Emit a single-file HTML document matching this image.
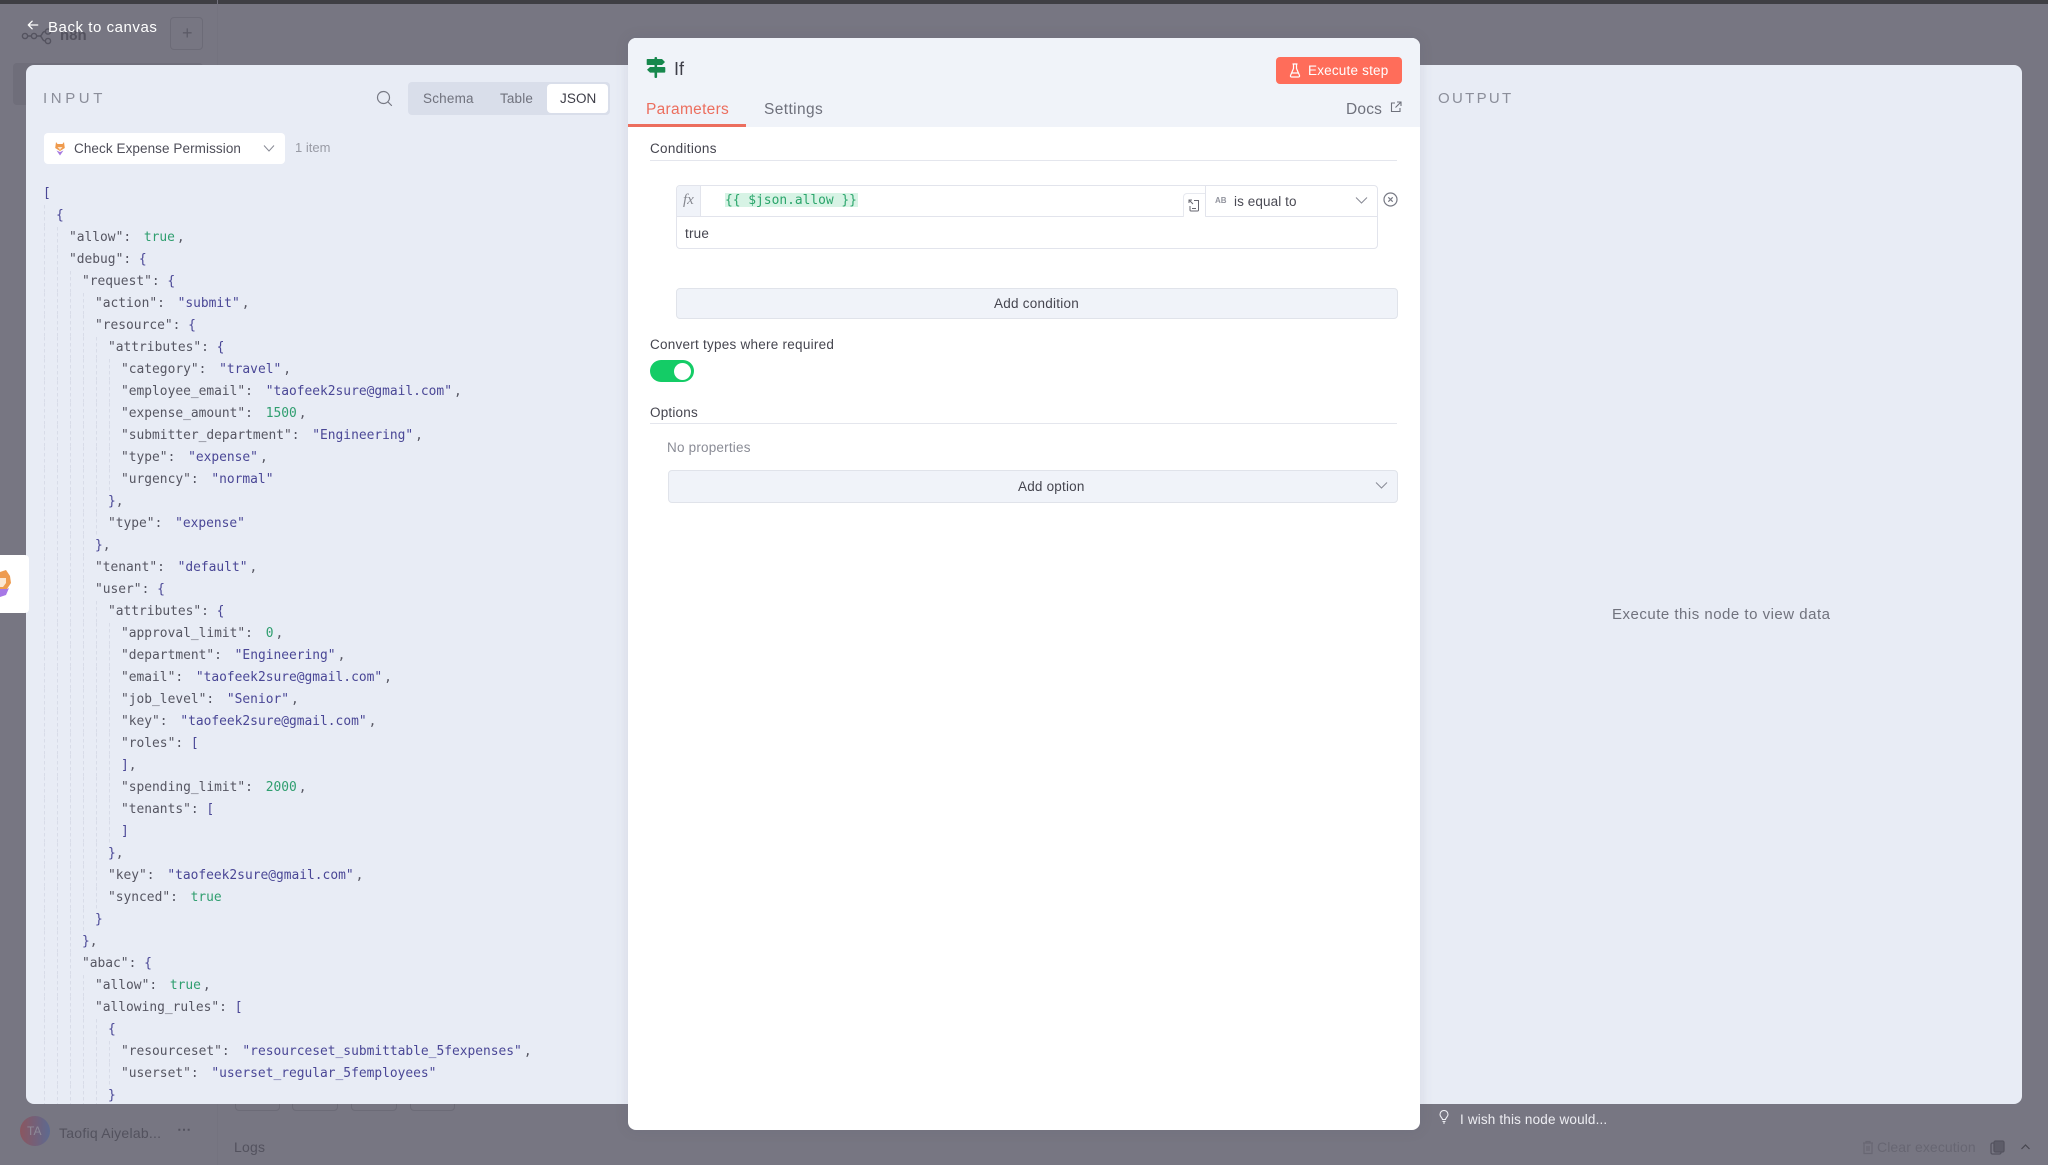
<!DOCTYPE html>
<html><head><meta charset="utf-8"><title>If</title>
<style>
*{box-sizing:border-box}
html,body{margin:0;padding:0;width:2048px;height:1165px;overflow:hidden;background:#777682;font-family:"Liberation Sans",sans-serif}
body{filter:blur(.3px)}
.a{position:absolute}
.t{position:absolute;white-space:nowrap;line-height:20px;height:20px;margin-top:1px}
#json{position:absolute;left:0;top:183px;width:620px;height:921px;overflow:hidden;font-family:"DejaVu Sans Mono","Liberation Mono",monospace;font-size:12.9px;color:#565662}
#json div{height:22px;line-height:22px;white-space:pre;background-repeat:repeat-y;background-size:1px 6px;
--d:linear-gradient(#d8dce8 60%,transparent 60%)}
.i0{padding-left:43px}
.i1{padding-left:56px;background-image:var(--d);background-position:44px 0}
.i2{padding-left:69px;background-image:var(--d),var(--d);background-position:44px 0,57px 0}
.i3{padding-left:82px;background-image:var(--d),var(--d),var(--d);background-position:44px 0,57px 0,70px 0}
.i4{padding-left:95px;background-image:var(--d),var(--d),var(--d),var(--d);background-position:44px 0,57px 0,70px 0,83px 0}
.i5{padding-left:108px;background-image:var(--d),var(--d),var(--d),var(--d),var(--d);background-position:44px 0,57px 0,70px 0,83px 0,96px 0}
.i6{padding-left:121px;background-image:var(--d),var(--d),var(--d),var(--d),var(--d),var(--d);background-position:44px 0,57px 0,70px 0,83px 0,96px 0,109px 0}
b{font-weight:normal;color:#4a4796}
i{font-style:normal;color:#4a4796;margin:0 2px 0 5px}
u{text-decoration:none;color:#2f9e6f;margin:0 2px 0 5px}
</style></head><body>

<!-- dimmed background -->
<div class="a" style="left:0;top:0;width:2048px;height:4px;background:#3f3f44"></div>
<div class="a" style="left:13px;top:63px;width:190px;height:42px;background:#6f6e7a;border-radius:4px"></div>
<div class="a" style="left:217px;top:0;width:1px;height:1165px;background:#74737f"></div>
<svg class="a" style="left:21px;top:28px" width="34" height="18" viewBox="0 0 34 18" fill="none" stroke="#54535f" stroke-width="1.4"><circle cx="4" cy="8" r="2.6"/><circle cx="13" cy="8" r="2.6"/><circle cx="27" cy="3.5" r="2.6"/><circle cx="27" cy="13" r="2.6"/><path d="M6.6 8h3.8M15.6 8h3c3 0 2-4.500 5.500-4.500M18.600 8c3 0 2 5 5.800 5"/></svg>
<div class="t" style="left:60px;top:25px;font-size:15px;font-weight:bold;color:#53525e">n8n</div>
<div class="a" style="left:170px;top:17px;width:33px;height:33px;border:1px solid #6c6b77;border-radius:4px"></div>
<div class="t" style="left:182px;top:22px;font-size:18px;color:#5c5b67">+</div>
<svg class="a" style="left:27px;top:19px" width="12" height="12" viewBox="0 0 14 14" fill="none" stroke="#fff" stroke-width="1.500" stroke-linecap="round" stroke-linejoin="round"><path d="M1.500 7h11M6 2.500 1.500 7 6 11.500"/></svg>
<div class="t" style="left:48px;top:16.500px;font-size:15px;color:#fff;letter-spacing:.55px">Back to canvas</div>

<div class="a" style="left:235px;top:1098px;width:45px;height:13px;border:1px solid #6c6b77;border-radius:4px"></div>
<div class="a" style="left:292px;top:1098px;width:46px;height:13px;border:1px solid #6c6b77;border-radius:4px"></div>
<div class="a" style="left:351px;top:1098px;width:46px;height:13px;border:1px solid #6c6b77;border-radius:4px"></div>
<div class="a" style="left:410px;top:1098px;width:45px;height:13px;border:1px solid #6c6b77;border-radius:4px"></div>
<div class="a" style="left:20px;top:1116px;width:30px;height:30px;border-radius:50%;background:linear-gradient(90deg,#8b5660,#5d6a90)"></div>
<div class="t" style="left:27px;top:1120px;font-size:12px;color:#8e8a98">TA</div>
<div class="t" style="left:59px;top:1122px;font-size:14px;color:#53525e;letter-spacing:.25px">Taofiq Aiyelab...</div>
<div class="t" style="left:177px;top:1118px;font-size:14px;font-weight:bold;color:#53525e">&#8943;</div>
<div class="t" style="left:234px;top:1136px;font-size:14px;color:#53525e;letter-spacing:.2px">Logs</div>

<svg class="a" style="left:1862px;top:1140px" width="12" height="15" viewBox="0 0 12 15" fill="none" stroke="#686773" stroke-width="1.200"><path d="M1 3h10M4 3V1.500h4V3M2 3v10.500h8V3M5 6v5M7 6v5"/></svg>
<div class="t" style="left:1877px;top:1136px;font-size:14px;color:#676672;letter-spacing:.1px">Clear execution</div>
<svg class="a" style="left:1990px;top:1140px" width="15" height="15" viewBox="0 0 15 15" fill="none" stroke="#54535f" stroke-width="1.300"><rect x="1" y="3" width="10" height="11" rx="1.500"/><rect x="4" y="1" width="10" height="11" rx="1.500" fill="#5d5c68"/></svg>
<svg class="a" style="left:2020px;top:1143px" width="11" height="8" viewBox="0 0 11 8" fill="none" stroke="#47464f" stroke-width="1.200"><path d="M1.500 6 5.500 2l4 4"/></svg>

<!-- input panel -->
<div class="a" style="left:26px;top:65px;width:610px;height:1039px;background:#e8ecf5;border-radius:8px 0 0 8px"></div>
<div class="t" style="left:43px;top:88px;font-size:15px;letter-spacing:3.600px;color:#8b8e9a">INPUT</div>
<svg class="a" style="left:376px;top:90px" width="17" height="17" viewBox="0 0 17 17" fill="none" stroke="#777984" stroke-width="1.200" stroke-linecap="round"><circle cx="7.500" cy="7.500" r="6"/><path d="m12 12 3.500 3.500"/></svg>
<div class="a" style="left:408px;top:82px;width:202px;height:33px;background:#d9deea;border-radius:4px"></div>
<div class="a" style="left:546.500px;top:84px;width:61.500px;height:29px;background:#fff;border-radius:4px"></div>
<div class="t" style="left:423px;top:88px;font-size:13.500px;color:#70727d;letter-spacing:.2px">Schema</div>
<div class="t" style="left:500px;top:88px;font-size:13.500px;color:#70727d;letter-spacing:.15px">Table</div>
<div class="t" style="left:560px;top:88px;font-size:13.500px;color:#3d3d47;letter-spacing:.1px">JSON</div>
<div class="a" style="left:44px;top:133px;width:241px;height:31px;background:#fff;border-radius:4px"></div>
<svg class="a" style="left:54px;top:141px" width="12" height="15" viewBox="0 0 12 15"><path d="M2 1 3.500 3h5L10 1l.800 6L6 10 1.200 7z" fill="#ef9a4c"/><path d="M3.500 6h5L6 9z" fill="#fbe3cc"/><path d="M2.500 9.500 6 11l3.500-1.500L6 14.500z" fill="#a67be0"/></svg>
<div class="t" style="left:74px;top:137.500px;font-size:13.500px;color:#4e4e59;letter-spacing:.08px">Check Expense Permission</div>
<svg class="a" style="left:263px;top:144px" width="12" height="9" viewBox="0 0 12 9" fill="none" stroke="#888a95" stroke-width="1"><path d="m1 1.500 5 5.500 5-5.500"/></svg>
<div class="t" style="left:295px;top:137px;font-size:13px;color:#999ba5">1 item</div>

<div id="json">
<div class="i0"><b>[</b></div>
<div class="i1"><b>{</b></div>
<div class="i2">"allow":<u> true</u>,</div>
<div class="i2">"debug": <b>{</b></div>
<div class="i3">"request": <b>{</b></div>
<div class="i4">"action":<i> "submit"</i>,</div>
<div class="i4">"resource": <b>{</b></div>
<div class="i5">"attributes": <b>{</b></div>
<div class="i6">"category":<i> "travel"</i>,</div>
<div class="i6">"employee_email":<i> "taofeek2sure@gmail.com"</i>,</div>
<div class="i6">"expense_amount":<u> 1500</u>,</div>
<div class="i6">"submitter_department":<i> "Engineering"</i>,</div>
<div class="i6">"type":<i> "expense"</i>,</div>
<div class="i6">"urgency":<i> "normal"</i></div>
<div class="i5"><b>}</b>,</div>
<div class="i5">"type":<i> "expense"</i></div>
<div class="i4"><b>}</b>,</div>
<div class="i4">"tenant":<i> "default"</i>,</div>
<div class="i4">"user": <b>{</b></div>
<div class="i5">"attributes": <b>{</b></div>
<div class="i6">"approval_limit":<u> 0</u>,</div>
<div class="i6">"department":<i> "Engineering"</i>,</div>
<div class="i6">"email":<i> "taofeek2sure@gmail.com"</i>,</div>
<div class="i6">"job_level":<i> "Senior"</i>,</div>
<div class="i6">"key":<i> "taofeek2sure@gmail.com"</i>,</div>
<div class="i6">"roles": <b>[</b></div>
<div class="i6"><b>]</b>,</div>
<div class="i6">"spending_limit":<u> 2000</u>,</div>
<div class="i6">"tenants": <b>[</b></div>
<div class="i6"><b>]</b></div>
<div class="i5"><b>}</b>,</div>
<div class="i5">"key":<i> "taofeek2sure@gmail.com"</i>,</div>
<div class="i5">"synced":<u> true</u></div>
<div class="i4"><b>}</b></div>
<div class="i3"><b>}</b>,</div>
<div class="i3">"abac": <b>{</b></div>
<div class="i4">"allow":<u> true</u>,</div>
<div class="i4">"allowing_rules": <b>[</b></div>
<div class="i5"><b>{</b></div>
<div class="i6">"resourceset":<i> "resourceset_submittable_5fexpenses"</i>,</div>
<div class="i6">"userset":<i> "userset_regular_5femployees"</i></div>
<div class="i5"><b>}</b></div>
<div class="i5"></div>
</div>

<!-- output panel -->
<div class="a" style="left:1412px;top:65px;width:610px;height:1039px;background:#e8ecf5;border-radius:0 8px 8px 0"></div>
<div class="t" style="left:1438px;top:88px;font-size:15px;letter-spacing:2.300px;color:#8b8e9a">OUTPUT</div>
<div class="t" style="left:1612px;top:604px;font-size:15px;color:#70727d;letter-spacing:.5px">Execute this node to view data</div>

<!-- side tab -->
<div class="a" style="left:0;top:555px;width:29px;height:58px;background:#fff;border-radius:0 4px 4px 0"></div>
<svg class="a" style="left:0;top:570px" width="11" height="28" viewBox="0 0 11 28"><path d="M0 2 6 0l4 6 1 7-4 6H0z" fill="#ee9b50"/><path d="M0 8h6v5l-3 4H0z" fill="#fbe7d4"/><path d="M0 19h7l2-1-3 7-6 2z" fill="#a678e6"/></svg>

<!-- center panel -->
<div class="a" style="left:628px;top:38px;width:792px;height:1092px;background:#fff;border-radius:8px;box-shadow:0 0 14px rgba(70,75,100,.12)"></div>
<div class="a" style="left:628px;top:38px;width:792px;height:89px;background:#f0f3f9;border-radius:8px 8px 0 0"></div>
<svg class="a" style="left:646px;top:57px" width="20" height="22" viewBox="0 0 20 22" fill="#17884d"><rect x="8.500" y="0" width="2.600" height="21" rx="1"/><path d="M1.500 2h14.500l3 3-3 3H1.500A.800.800 0 0 1 .700 7V3a.800.800 0 0 1 .800-1zM4 10h14.500a.800.800 0 0 1 .800.800v4a.800.800 0 0 1-.800.800H4l-3-2.800z"/></svg>
<div class="t" style="left:674px;top:58px;font-size:18px;color:#3e3e48">If</div>
<div class="a" style="left:1276px;top:57px;width:126px;height:27px;background:#ff6d5a;border-radius:4px"></div>
<svg class="a" style="left:1289px;top:63px" width="12" height="15" viewBox="0 0 12 15" fill="none" stroke="#fff" stroke-width="1.200" stroke-linejoin="round"><path d="M3.500 1h5M4.500 1v4.500L1.500 12.500c-.300.800.200 1.500 1 1.500h7c.800 0 1.300-.700 1-1.500L7.500 5.500V1M3 10h6"/></svg>
<div class="t" style="left:1308px;top:59.500px;font-size:13.500px;color:#fff;letter-spacing:.2px">Execute step</div>
<div class="t" style="left:646px;top:99px;font-size:15.500px;color:#ec6e5e;letter-spacing:.3px">Parameters</div>
<div class="t" style="left:764px;top:99px;font-size:15.500px;color:#6f717c;letter-spacing:.4px">Settings</div>
<div class="t" style="left:1346px;top:99px;font-size:15.500px;color:#6f717c;letter-spacing:.2px">Docs</div>
<svg class="a" style="left:1390px;top:101px" width="12" height="12" viewBox="0 0 12 12" fill="none" stroke="#6f717c" stroke-width="1.100"><path d="M5 2H1.500v8.500H10V7M7 1h4v4M11 1 5.500 6.500"/></svg>
<div class="a" style="left:628px;top:124px;width:118px;height:3px;background:#ec6e5e"></div>

<div class="t" style="left:650px;top:138px;font-size:13.500px;color:#45454f;letter-spacing:.3px">Conditions</div>
<div class="a" style="left:650px;top:160px;width:747px;height:1px;background:#e4e6ed"></div>

<div class="a" style="left:676px;top:185px;width:702px;height:64px;background:#fff;border:1px solid #e2e4ec;border-radius:4px"></div>
<div class="a" style="left:677px;top:186px;width:24px;height:30px;background:#f0f3f9;border-right:1px solid #e2e4ec;border-radius:3px 0 0 0"></div>
<div class="t" style="left:683px;top:189px;font-family:'Liberation Serif',serif;font-style:italic;font-size:15px;color:#85878f">fx</div>
<div class="a" style="left:677px;top:216px;width:700px;height:1px;background:#e2e4ec"></div>
<div class="a" style="left:725px;top:193px;width:133px;height:14px;background:#d7f3e5"></div>
<div class="t" style="left:725px;top:190px;font-family:'DejaVu Sans Mono',monospace;font-size:12.900px;color:#2ba56b">{{ $json.allow }}</div>
<div class="a" style="left:1183px;top:193px;width:23px;height:24px;background:#fff;border:1px solid #e7e9ef;border-bottom:none;border-radius:4px 0 0 0"></div>
<svg class="a" style="left:1188px;top:199px" width="12" height="13" viewBox="0 0 12 13" fill="none" stroke="#66666f" stroke-width="1"><path d="M1 1 5 5M1 4V1h3M6 1.500h4.500v9.500a1 1 0 0 1-1 1H3a1 1 0 0 1-1-1V7"/><path d="M4 9.500h4"/></svg>
<div class="a" style="left:1205px;top:186px;width:1px;height:30px;background:#e2e4ec"></div>
<div class="t" style="left:1215px;top:190px;font-size:8px;font-weight:bold;color:#92949e">AB</div>
<div class="t" style="left:1234px;top:191px;font-size:13.500px;color:#4a4a54;letter-spacing:.1px">is equal to</div>
<svg class="a" style="left:1355px;top:196px" width="13" height="9" viewBox="0 0 13 9" fill="none" stroke="#888a95" stroke-width="1"><path d="m1 1.500 5.500 5.500L12 1.500"/></svg>
<svg class="a" style="left:1383px;top:191.500px" width="15" height="15" viewBox="0 0 15 15" fill="none" stroke="#777984" stroke-width="1.200"><circle cx="7.500" cy="7.500" r="6.500"/><path d="m5.300 5.300 4.400 4.400M9.700 5.300l-4.400 4.400"/></svg>
<div class="t" style="left:685px;top:222.500px;font-size:13.500px;color:#45454f;letter-spacing:.2px">true</div>

<div class="a" style="left:676px;top:288px;width:722px;height:31px;background:#f0f3f9;border:1px solid #e0e3ea;border-radius:4px"></div>
<div class="t" style="left:994px;top:293px;font-size:13.500px;color:#45454f;letter-spacing:.25px">Add condition</div>

<div class="t" style="left:650px;top:333.500px;font-size:13.500px;color:#45454f;letter-spacing:.25px">Convert types where required</div>
<div class="a" style="left:650px;top:360px;width:44px;height:22px;background:#14cc66;border-radius:11px"></div>
<div class="a" style="left:674px;top:362.500px;width:17px;height:17px;background:#fff;border-radius:50%"></div>

<div class="t" style="left:650px;top:402px;font-size:13.500px;color:#45454f;letter-spacing:.2px">Options</div>
<div class="a" style="left:650px;top:423px;width:747px;height:1px;background:#e4e6ed"></div>
<div class="t" style="left:667px;top:437px;font-size:13.500px;color:#8a8c96;letter-spacing:.2px">No properties</div>
<div class="a" style="left:668px;top:470px;width:730px;height:33px;background:#f0f3f9;border:1px solid #e0e3ea;border-radius:4px"></div>
<div class="t" style="left:1018px;top:476px;font-size:13.500px;color:#45454f;letter-spacing:.2px">Add option</div>
<svg class="a" style="left:1375px;top:481px" width="13" height="9" viewBox="0 0 13 9" fill="none" stroke="#888a95" stroke-width="1"><path d="m1 1.500 5.500 5.500L12 1.500"/></svg>

<!-- feedback -->
<svg class="a" style="left:1439px;top:1110px" width="10" height="14" viewBox="0 0 10 14" fill="none" stroke="#eeeef3" stroke-width="1.100"><path d="M3.500 9.500C3.200 7.500 1 7 1 4.500a4 4 0 0 1 8 0C9 7 6.800 7.500 6.500 9.500zM3.500 11.500h3M4 13h2"/></svg>
<div class="t" style="left:1460px;top:1109px;font-size:13.500px;color:#eeeef3;letter-spacing:.16px">I wish this node would...</div>

</body></html>
